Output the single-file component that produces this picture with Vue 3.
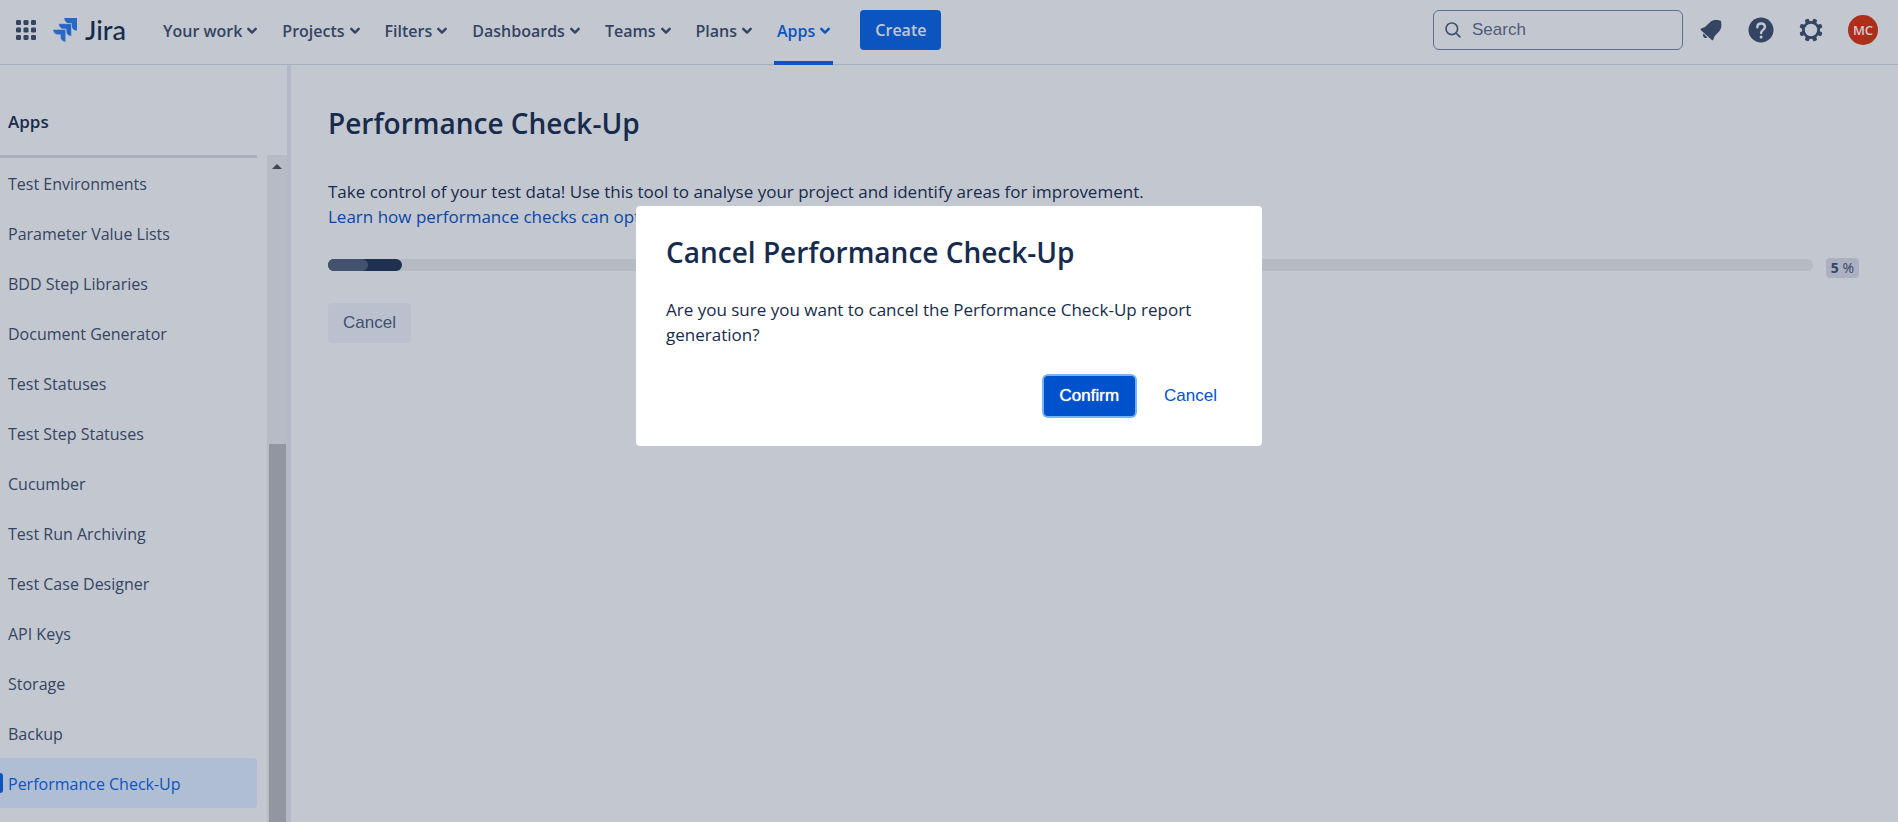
<script setup>
const nav = ['Your work', 'Projects', 'Filters', 'Dashboards', 'Teams', 'Plans', 'Apps']
const items = [
  'Test Environments', 'Parameter Value Lists', 'BDD Step Libraries', 'Document Generator',
  'Test Statuses', 'Test Step Statuses', 'Cucumber', 'Test Run Archiving', 'Test Case Designer',
  'API Keys', 'Storage', 'Backup', 'Performance Check-Up'
]
const current = 'Performance Check-Up'
const progress = 5
const dots = [0, 7.5, 15]
const teeth = [0, 45, 90, 135, 180, 225, 270, 315]
</script>

<template>
  <div class="page">
    <header class="topbar">
      <button class="icon-btn switcher" aria-label="App switcher">
        <svg width="20" height="20" viewBox="0 0 20 20" fill="#344563">
          <template v-for="y in dots" :key="y">
            <rect v-for="x in dots" :key="x" :x="x" :y="y" width="5" height="5" rx="1.2" />
          </template>
        </svg>
      </button>
      <a href="#" class="logo" aria-label="Jira home">
        <svg width="24" height="24" viewBox="0 0 24 24">
          <path d="M11.3 0H24v12.6c-3 0-5.3-2.300-5.300-5.200V5.300h-2.100c-3 0-5.300-2.300-5.300-5.300z" fill="#2769c6" />
          <path d="M5.700 5.700h12.700v12.600c-3 0-5.300-2.300-5.300-5.200V11H11c-3 0-5.300-2.300-5.300-5.300z" fill="#2465c4" stroke="#c3c7d0" stroke-width=".5" />
          <path d="M0 11.400h12.700V24c-3 0-5.300-2.300-5.300-5.200v-2.100H5.300C2.300 16.700 0 14.400 0 11.400z" fill="#2769c6" stroke="#c3c7d0" stroke-width=".5" />
        </svg>
        <span>Jira</span>
      </a>
      <nav class="nav">
        <button v-for="n in nav" :key="n" class="nav-item" :class="{ active: n === 'Apps' }">
          {{ n }}
          <svg width="10" height="8" viewBox="0 0 10 8" fill="none" stroke="currentColor" stroke-width="2.400" stroke-linecap="round" stroke-linejoin="round">
            <path d="M1.300 1.800 5 5.600 8.700 1.800" />
          </svg>
        </button>
      </nav>
      <button class="create">Create</button>
      <div class="tools">
        <label class="search">
          <svg width="16" height="16" viewBox="0 0 16 16" fill="none" stroke="#42526e" stroke-width="1.700" stroke-linecap="round">
            <circle cx="6.800" cy="6.800" r="5.800" />
            <path d="m11.200 11.200 3.600 3.600" />
          </svg>
          <input type="text" placeholder="Search" aria-label="Search" />
        </label>
        <button class="icon-btn" aria-label="Notifications">
          <svg width="26" height="26" viewBox="0 0 26 26" fill="#344563">
            <path d="M3 13.200c-.6-.5-.5-1.200.2-1.600l3.800-1.500 5.300-5.200c2.200-1.800 5.300-2.200 9.500-1.400.8.100 1.200.5 1.300 1.200.7 4 .2 7.200-1.800 9.500l-4.600 4.800-1.500 3.700c-.3.700-.9.800-1.400.3z" />
            <path d="M5.500 16.600 9.400 20.500a2.800 2.800 0 0 1-3.900-3.900z" />
          </svg>
        </button>
        <button class="icon-btn" aria-label="Help">
          <svg width="26" height="26" viewBox="0 0 26 26">
            <circle cx="13" cy="13" r="12.500" fill="#344563" />
            <path d="M9.300 10.200c0-2.200 1.600-3.700 3.800-3.700s3.800 1.400 3.800 3.500c0 3-3.800 2.800-3.800 6" fill="none" stroke="#c3c7d0" stroke-width="2.400" stroke-linecap="round" />
            <circle cx="13.100" cy="20" r="1.500" fill="#c3c7d0" />
          </svg>
        </button>
        <button class="icon-btn" aria-label="Settings">
          <svg width="26" height="26" viewBox="0 0 26 26">
            <g fill="#344563">
              <rect v-for="t in teeth" :key="t" x="10.900" y="1.300" width="4.200" height="5" rx="1.300" :transform="`rotate(${t + 22.5} 13 13)`" />
            </g>
            <circle cx="13" cy="13" r="7.600" fill="none" stroke="#344563" stroke-width="2.800" />
          </svg>
        </button>
        <button class="avatar" aria-label="Account">MC</button>
      </div>
    </header>

    <div class="body">
      <aside class="sidebar">
        <h2>Apps</h2>
        <div class="side-scroll">
          <ul>
            <li v-for="i in items" :key="i"><a href="#" :class="{ current: i === current }">{{ i }}</a></li>
          </ul>
          <div class="track">
            <svg width="10" height="5" viewBox="0 0 10 5"><path d="M0 5 5 0l5 5z" fill="#40454f" /></svg>
            <div class="thumb"></div>
          </div>
        </div>
      </aside>
      <main class="content">
        <h1>Performance Check-Up</h1>
        <p>Take control of your test data! Use this tool to analyse your project and identify areas for improvement.</p>
        <p><a href="#">Learn how performance checks can optimise your project</a></p>
        <div class="progress-row">
          <div class="bar" role="progressbar" :aria-valuenow="progress" aria-valuemin="0" aria-valuemax="100">
            <div class="fill" :style="{ width: progress + '%' }"><div class="pulse"></div></div>
          </div>
          <span class="badge"><b>{{ progress }}</b> %</span>
        </div>
        <button class="btn neutral">Cancel</button>
      </main>
    </div>

    <section class="modal" role="dialog" aria-modal="true" aria-labelledby="dialog-title">
      <h1 id="dialog-title">Cancel Performance Check-Up</h1>
      <p>Are you sure you want to cancel the Performance Check-Up report generation?</p>
      <footer>
        <button class="btn primary">Confirm</button>
        <button class="btn link">Cancel</button>
      </footer>
    </section>
  </div>
</template>

<style>
body { margin: 0; background: #c3c7d0; }
</style>

<style scoped>
* { box-sizing: border-box; }
.page {
  height: 100vh;
  display: flex;
  flex-direction: column;
  overflow: hidden;
  background: #c3c7d0;
  color: #172b4d;
  font: 17px/25px "Open Sans", "Noto Sans", sans-serif;
}
button { border: 0; background: none; padding: 0; font: inherit; color: inherit; cursor: pointer; }
a { color: #0747a6; text-decoration: none; }
h1, h2, p, ul { margin: 0; padding: 0; font-weight: 400; }
svg { display: block; flex: none; }

.topbar {
  flex: none;
  height: 65px;
  border-bottom: 1px solid #a5afbf;
  display: flex;
  align-items: flex-start;
  padding: 0 20px 0 16px;
}
.icon-btn { height: 60px; display: flex; align-items: center; }
.logo { width: 107px; height: 60px; margin-left: 17px; display: flex; align-items: center; gap: 8px; color: #172b4d; font-family: Lato, sans-serif; font-size: 27px; line-height: 60px; font-weight: 500; }
.nav { display: flex; height: 65px; gap: 19px; }
.nav-item {
  display: flex;
  align-items: center;
  gap: 5px;
  height: 65px;
  padding: 0 3px;
  border-bottom: 4px solid transparent;
  border-top: 1px solid transparent;
  color: #344563;
  font-size: 16px;
  font-weight: 600;
  white-space: nowrap;
}
.nav-item.active { color: #0c54bf; border-bottom-color: #0c54bf; }
.create { height: 40px; margin: 10px 0 0 27px; padding: 0 15px; border-radius: 4px; background: #0c54bf; color: #c3c7d0; font-size: 16px; font-weight: 600; }
.tools { margin-left: auto; display: flex; align-items: flex-start; gap: 24px; }
.search { width: 250px; height: 40px; margin: 10px -9px 0 0; border: 1px solid #5e6f8d; border-radius: 6px; display: flex; align-items: center; gap: 11px; padding: 0 11px; }
.search input { flex: 1; min-width: 0; height: 36px; border: 0; outline: 0; padding: 0 0 1px; background: transparent; font: 17px "Liberation Sans", Arial, sans-serif; color: #42526e; }
.search input::placeholder { color: #4d5d79; opacity: 1; }
.avatar { width: 30px; height: 30px; margin-top: 15px; border-radius: 50%; background: #ad2e1b; color: #d5c9cd; font-size: 13px; font-weight: 600; line-height: 30px; }

.body { flex: 1; min-height: 0; display: flex; }
.sidebar { flex: none; width: 291px; border-right: 4px solid #b4b9c9; display: flex; flex-direction: column; }
.sidebar h2 { height: 90px; padding: 44px 8px 0; font-size: 17px; font-weight: 600; }
.side-scroll { flex: 1; min-height: 0; display: flex; justify-content: space-between; }
.side-scroll ul { width: 257px; list-style: none; border-top: 3px solid #a7afbd; }
.side-scroll a { display: block; height: 50px; padding: 2px 8px 0; font-size: 16px; line-height: 48px; color: #344563; border-radius: 0 4px 4px 0; }
.side-scroll a.current { position: relative; background: #b0bed3; color: #0c54bf; }
.side-scroll a.current::before { content: ""; position: absolute; left: 0; top: 15px; width: 3px; height: 20px; border-radius: 0 3px 3px 0; background: #0c54bf; }
.track { width: 20px; background: #b7bbc4; display: flex; flex-direction: column; align-items: center; padding-top: 9px; }
.thumb { flex: 1; width: 17px; margin-top: 275px; background: #9296a0; }

.content { flex: 1; min-width: 0; padding: 38px 39px 0 37px; }
h1 { font-size: 28px; line-height: 40px; font-weight: 600; }
.content h1 { margin-bottom: 36px; }
.progress-row { display: flex; align-items: flex-start; gap: 13px; margin: 29px 0 25px; }
.bar { flex: 1; height: 12px; margin-top: 1px; border-radius: 6px; background: #b6bac3; }
.fill { height: 12px; border-radius: 6px; background: #1e3151; }
.pulse { width: 40px; height: 12px; border-radius: 6px; background: #44536d; }
.badge { height: 20px; padding: 0 5px; border-radius: 4px; background: #abb1c1; color: #344563; font-size: 14px; font-weight: 500; line-height: 19px; white-space: nowrap; }
.btn { height: 40px; padding: 0 15px; border-radius: 4px; font: 17px "Liberation Sans", Arial, sans-serif; }
.neutral { background: #bac0ce; color: #42526e; }

.modal {
  position: absolute;
  top: 206px;
  left: 50%;
  width: 626px;
  transform: translateX(-50%);
  padding: 26px 30px 30px;
  border-radius: 4px;
  background: #fff;
}
.modal p { margin-top: 25px; }
.modal footer { display: flex; justify-content: flex-end; gap: 14px; margin-top: 29px; }
.primary { padding: 0 16px; background: #0052cc; color: #fff; box-shadow: 0 0 0 2px #75b2ff; text-shadow: 0 0 1px #fff; }
.link { color: #0052cc; }
</style>
